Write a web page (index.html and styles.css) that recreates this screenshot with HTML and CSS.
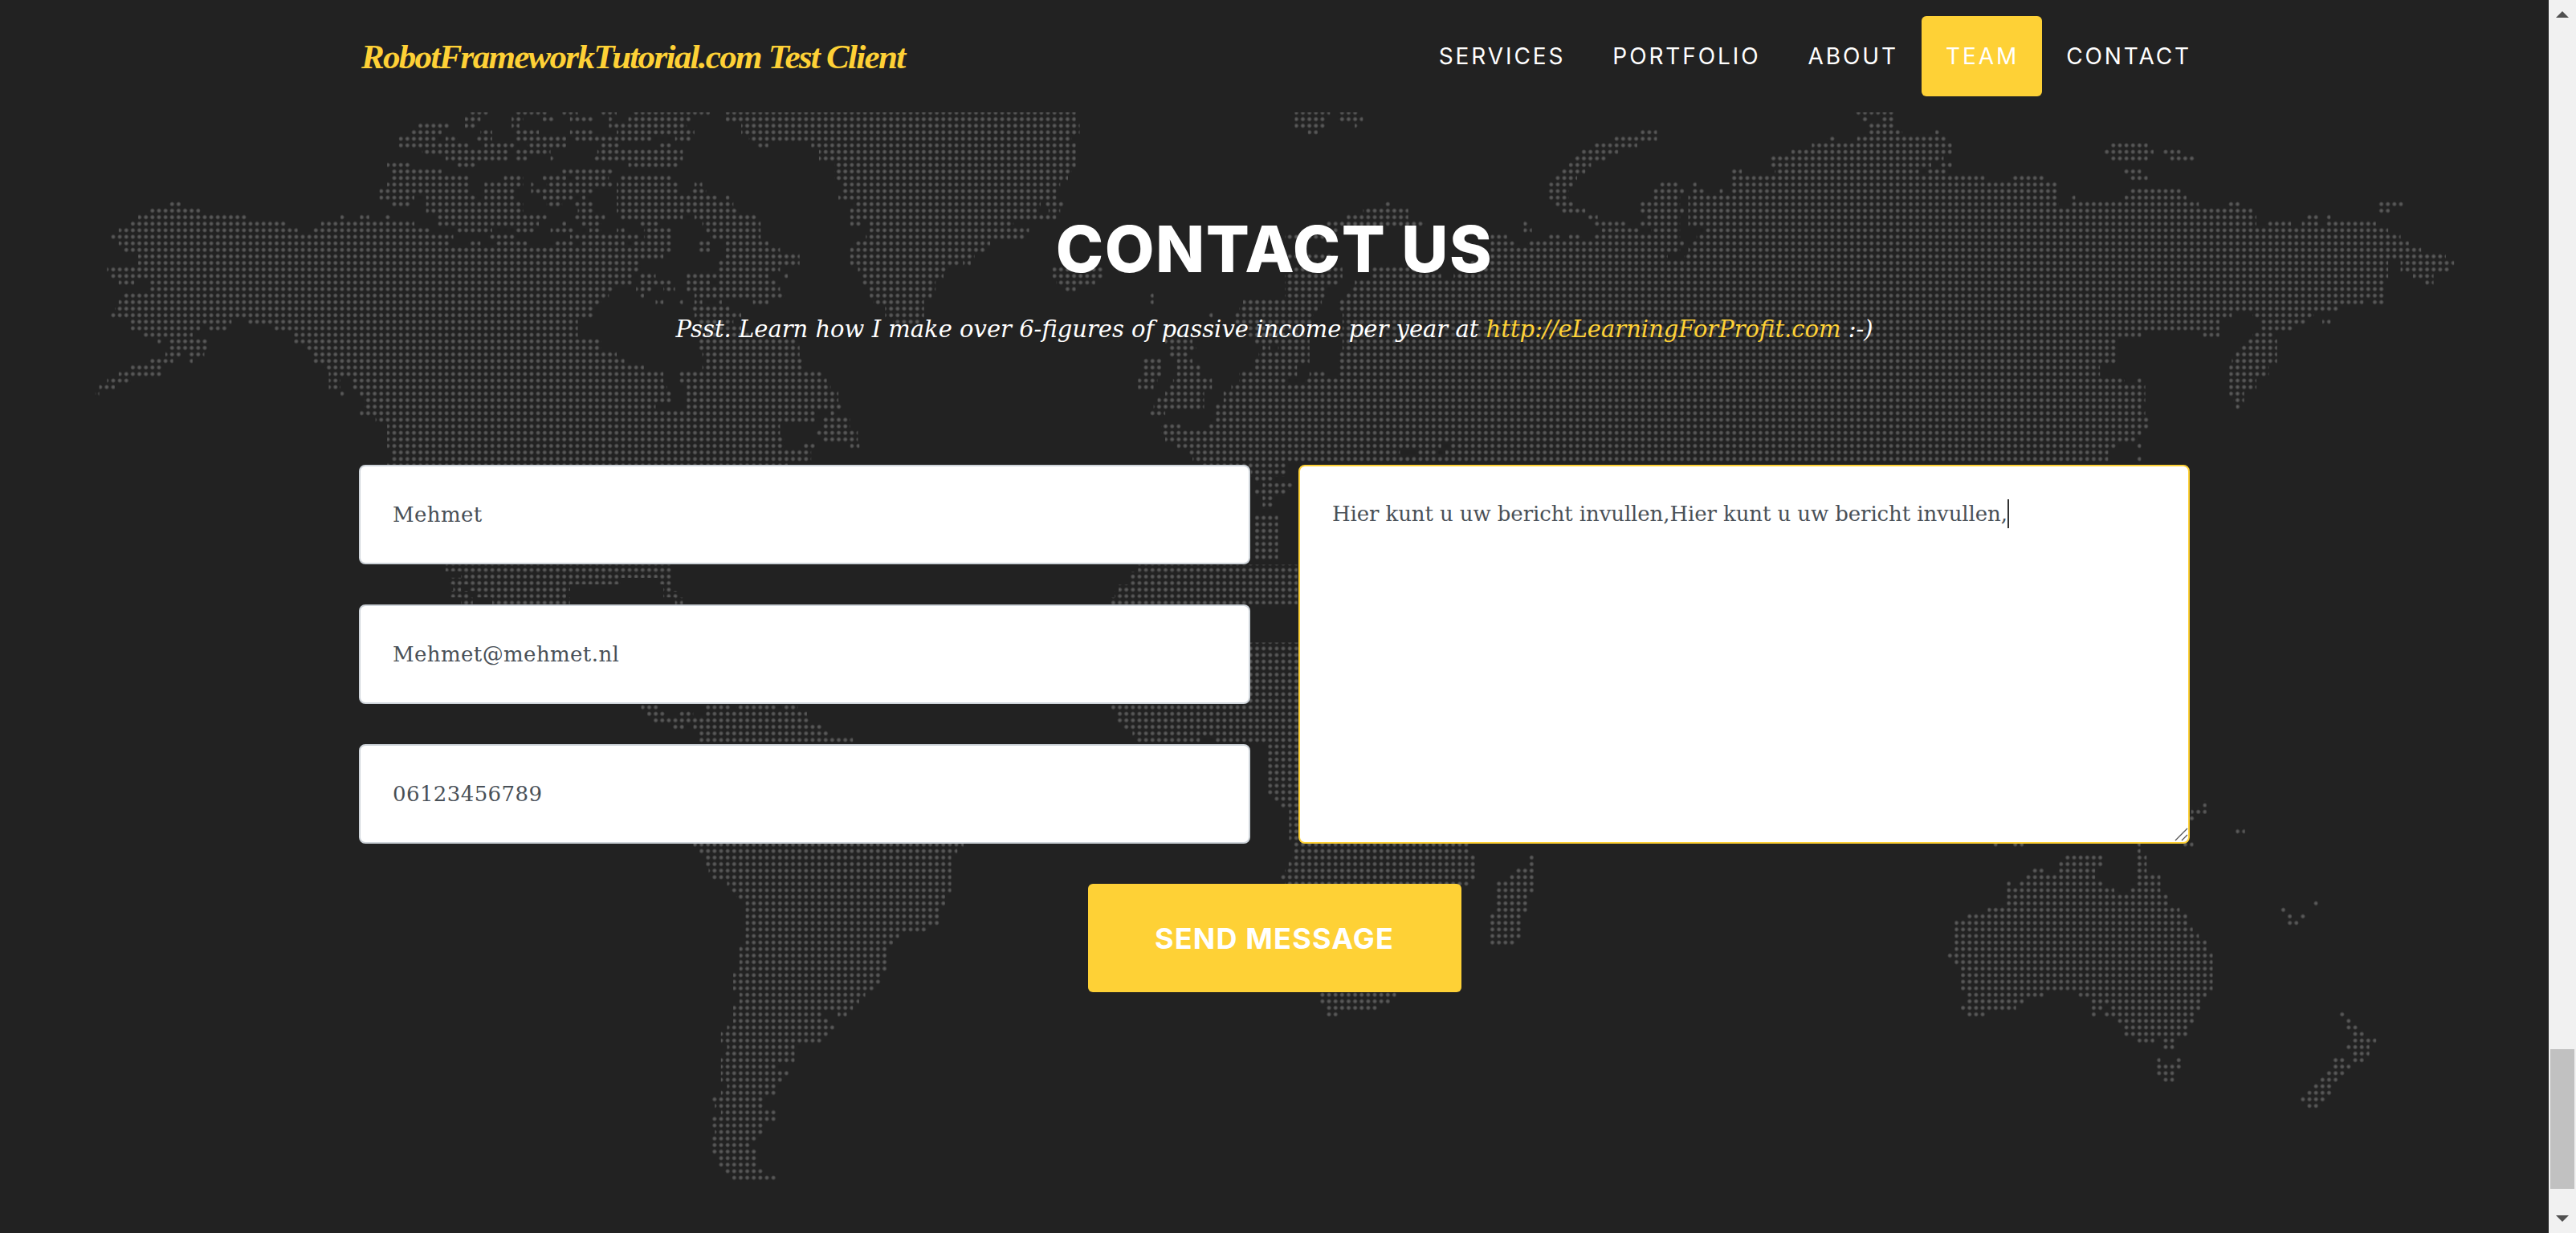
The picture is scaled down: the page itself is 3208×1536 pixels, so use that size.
FILE: index.html
```html
<!DOCTYPE html>
<html lang="en">
<head>
<meta charset="utf-8">
<title>RobotFrameworkTutorial.com Test Client</title>
<link rel="stylesheet" href="styles.css">
</head>
<body>
<div class="page">
  <svg class="world" viewBox="0 0 3174 1536" width="3174" height="1536" aria-hidden="true">
    <defs>
      <radialGradient id="dot">
        <stop offset="0" stop-color="#606060"/>
        <stop offset=".55" stop-color="#4e4e4e"/>
        <stop offset="1" stop-color="#222222"/>
      </radialGradient>
      <pattern id="dots" patternUnits="userSpaceOnUse" x="136.93" y="290.93" width="8.14" height="8.14">
        <circle cx="4.07" cy="4.07" r="3.2" fill="url(#dot)"/>
      </pattern>
      <mask id="land" maskUnits="userSpaceOnUse" x="0" y="0" width="3174" height="1536">
        <path class="land" stroke-width="17.5" transform="translate(80 120) scale(.969 .4656)" d="M520 44H545M580 44H620M640 44H660M690 44H710M730 44H830M850 44H1300
M515 61H535M575 61H590M615 61H630M650 61H680M700 61H705M725 61H805M850 61H1300
M455 79H495M515 79H530M575 79H585M700 79H800M870 79H1305
M445 96H485M535 96H550M580 96H610M650 96H680M710 96H810M870 96H1305
M430 114H480M490 114H505M530 114H550M580 114H645M655 114H755M785 114H805M880 114H1295
M430 131H520M540 131H580M595 131H645M690 131H715M765 131H780M890 131H905M960 131H1300
M460 149H570M580 149H625M685 149H795M970 149H1300
M490 166H570M580 166H595M625 166H630M680 166H795M970 166H1300
M415 184H445M505 184H530M725 184H790M990 184H1300
M420 201H485M640 201H705M990 201H1295
M420 219H520M565 219H590M615 219H645M655 219H700M715 219H780M990 219H1290
M415 236H520M540 236H590M600 236H605M620 236H705M710 236H790M810 236H820M1000 236H1280
M405 254H520M540 254H580M600 254H680M710 254H790M805 254H825M1000 254H1275
M405 271H450M465 271H530M540 271H580M615 271H655M665 271H670M710 271H840M850 271H855M995 271H1275
M135 289H150M420 289H445M465 289H590M620 289H640M655 289H680M710 289H860M1015 289H1255M1260 289H1285
M110 306H175M465 306H590M660 306H680M710 306H865M1010 306H1250M1265 306H1280
M95 323H235M355 323H362M380 323H392M412 323H420M480 323H620M655 323H695M715 323H795M810 323H890M1010 323H1275
M85 341H285M330 341H450M480 341H610M640 341H645M665 341H690M740 341H765M820 341H895M1010 341H1025M1035 341H1220
M70 358H300M320 358H470M505 358H550M580 358H605M625 358H655M675 358H690M710 358H720M745 358H780M825 358H895M1035 358H1240
M60 376H500M545 376H580M650 376H740M745 376H780M830 376H895M1030 376H1235
M70 393H495M520 393H535M555 393H595M630 393H655M665 393H720M730 393H780M815 393H830M850 393H905M1015 393H1190
M75 411H780M815 411H830M850 411H920M1010 411H1185
M95 428H770M850 428H945M1010 428H1170
M95 446H740M840 446H945M1010 446H1150M1155 446H1165
M55 463H740M840 463H920M1020 463H1135M1270 463H1335
M60 481H730M740 481H760M800 481H905M925 481H930M1025 481H1130M1270 481H1335
M70 498H90M110 498H730M740 498H780M800 498H830M840 498H915M1025 498H1120M1275 498H1325
M110 516H705M735 516H755M770 516H785M800 516H920M1035 516H1120M1285 516H1300
M75 533H700M740 533H745M810 533H925M1035 533H1115M1395 533H1400
M70 551H690M760 551H770M790 551H795M810 551H820M840 551H845M885 551H905M1040 551H1105M1395 551H1400M1515 551H1570
M65 568H680M805 568H855M1055 568H1105M1510 568H1570
M60 586H680M810 586H870M1055 586H1105M1470 586H1476M1505 586H1570
M85 603H215M235 603H660M815 603H860M1065 603H1100M1505 603H1570
M85 621H175M185 621H210M270 621H660M815 621H870M1510 621H1570
M100 638H165M295 638H660M820 638H880M1520 638H1570
M120 656H125M135 656H185M295 656H690M815 656H940M1415 656H1450M1530 656H1570
M135 673H185M310 673H690M815 673H945M1420 673H1455M1540 673H1550M1560 673H1570
M130 691H150M160 691H180M320 691H710M820 691H945M1420 691H1445M1535 691H1570
M110 708H140M160 708H165M320 708H720M825 708H950M1385 708H1410M1430 708H1450M1530 708H1570
M85 726H125M335 726H745M820 726H950M1385 726H1410M1430 726H1460M1530 726H1570
M70 743H125M340 743H770M790 743H975M1385 743H1410M1430 743H1460M1510 743H1570
M55 761H85M340 761H355M370 761H770M790 761H980M1380 761H1405M1425 761H1475M1510 761H1570
M45 778H65M340 778H355M370 778H775M800 778H985M1380 778H1400M1420 778H1475M1500 778H1570
M40 796H45M355 796H360M380 796H780M800 796H995M1415 796H1465M1490 796H1570
M385 813H780M800 813H995M1405 813H1465M1490 813H1570
M385 831H760M800 831H1000M1400 831H1465M1480 831H1570
M380 848H965M985 848H990M1395 848H1415M1480 848H1570
M400 866H965M975 866H1010M1480 866H1570
M415 883H920M975 883H1010M1410 883H1435M1470 883H1570
M415 901H920M965 901H1020M1410 901H1570
M415 918H925M975 918H1020M1415 918H1570
M415 936H925M950 936H965M1010 936H1022M1430 936H1570
M420 953H960M1445 953H1570
M420 971H960M1450 971H1570
M415 988H930M1460 988H1570
M1525 1008H1570M1530 1025H1555M1540 1043H1580M1530 1060H1570M1540 1078H1555M1540 1095H1555
M1530 1130H1560M1530 1148H1560M1530 1165H1560M1530 1183H1560M1530 1200H1560M1530 1218H1560M1530 1235H1560
M490 1262H780M1380 1262H1585M510 1280H780M1370 1280H1585M495 1297H715M765 1297H780M1370 1297H1585
M500 1315H510M520 1315H650M770 1315H780M1355 1315H1585M495 1332H520M530 1332H645M770 1332H790M1350 1332H1585
M510 1350H525M550 1350H650M785 1350H795M1345 1350H1585"/>
        <path class="land" stroke-width="17" transform="translate(1600 0) scale(1.0255 .491)" d="M12 286H55M65 286H90M692 286H740
M12 302H50M65 302H95M700 302H708M725 302H740
M12 319H50M85 319H90M708 319H740
M28 336H40M432 336H452M708 336H750M790 336H795
M400 352H452M660 352H668M695 352H803
M375 369H428M640 369H810M1003 369H1048
M360 385H405M615 385H810M995 385H1055M1065 385H1088
M352 402H390M590 402H800M1003 402H1048M1075 402H1105
M345 418H372M590 418H785M795 418H810
M335 435H365M542 435H555M595 435H770M780 435H803M1018 435H1040
M328 452H355M542 452H850M882 452H922M1025 452H1048
M320 468H350M455 468H478M495 468H500M542 468H938
M320 485H345M448 485H485M495 485H510M528 485H532M542 485H938M1025 485H1088
M320 501H345M448 501H480M490 501H938M955 501H960M1020 501H1095
M120 518H128M328 518H350M430 518H480M490 518H940M955 518H1110M1145 518H1160M1328 518H1358
M95 534H150M335 534H365M430 534H485M490 534H1175M1328 534H1342
M75 551H150M368 551H380M438 551H480M490 551H1180M1240 551H1255M1265 551H1270
M50 568H170M290 568H296M375 568H415M430 568H480M490 568H1180M1192 568H1222M1235 568H1255M1265 568H1325
M48 584H65M290 584H300M385 584H430M445 584H480M510 584H1340
M0 601H60M250 601H270M320 601H335M345 601H360M375 601H480M500 601H1355
M250 618H280M295 618H485M495 618H1365
M250 634H480M490 634H1380
M0 651H60M250 651H465M485 651H1410
M225 668H1340M1355 668H1420
M0 684H70M105 684H180M225 684H1340M1355 684H1415
M0 700H70M105 700H190M205 700H1340M1370 700H1395
M0 717H65M85 717H1335M1385 717H1395
M0 733H50M80 733H1335
M0 750H50M75 750H1335
M0 767H45M65 767H1310M1320 767H1335
M0 783H40M65 783H1280
M0 800H35M70 800H1150M1175 800H1250
M0 816H35M70 816H1135M1185 816H1240M1260 816H1270
M0 833H32M70 833H1135M1185 833H1225
M0 850H30M65 850H1040M1115 850H1135M1175 850H1200
M0 866H30M70 866H1010M1170 866H1205
M0 883H30M70 883H1010M1160 883H1205
M0 899H30M65 899H1010M1155 899H1205
M0 916H30M65 916H1010M1150 916H1205
M0 932H15M65 932H990M1147 932H1195
M0 949H15M30 949H50M65 949H990M1147 949H1195
M25 966H1020M1035 966H1040M1147 966H1180
M0 982H1045M1147 982H1180
M0 999H1045M1147 999H1165
M0 1015H1045M1152 1015H1165
M0 1032H1040M1155 1032H1160
M0 1048H1045M0 1065H1050M0 1081H1050M0 1098H1040M0 1115H1035
M0 1131H190M200 1131H1010M1035 1131H1040
M0 1148H140M160 1148H185M195 1148H1000
M0 1165H1000M1035 1165H1040"/>
        <path class="land" stroke-width="18.3" transform="translate(500 800) scale(.765 .4464)" d="M1380 10H1460M1380 28H1460M1380 46H1460M1380 64H1460M1380 82H1460M1380 100H1460M1380 118H1460M1380 136H1460M1380 154H1460M1380 172H1460
M390 182H420M495 182H535M545 182H610M620 182H645M1155 182H1460
M400 200H430M450 200H475M495 200H660M1165 200H1460
M410 218H665M1165 218H1460
M440 236H460M475 236H685M1175 236H1460
M485 254H695M1190 254H1460
M485 273H735M1195 273H1300M1325 273H1460
M1410 291H1460M1410 309H1460M1410 328H1460M1410 346H1460M1410 364H1460M1410 382H1460M1410 401H1460M1410 419H1460M1420 437H1460M1430 455H1460M1445 473H1460M1445 491H1460M1445 510H1460M1445 528H1460M1445 546H1460M1455 558H1460
M475 565H915M1455 565H1568
M485 583H905M1455 583H1568
M495 601H895M1450 601H1568
M495 619H895M1445 619H1568
M500 637H895M1440 637H1568
M505 655H895M1430 655H1568
M530 674H895M535 692H895M545 710H885M560 728H885M560 747H875M560 765H875M560 783H875M560 801H855M560 820H810M560 838H800
M550 856H790M550 874H790M550 892H790M550 910H790M540 929H780M540 947H780M540 965H770M550 983H755M550 1001H745M540 1020H735
M540 1038H685M710 1038H725M540 1056H695M530 1074H705M520 1093H695M520 1111H685M530 1129H640M525 1148H640M520 1166H640
M520 1184H610M520 1202H630M520 1220H620M530 1239H610M520 1257H610M505 1275H590M510 1293H590M520 1311H610M505 1330H610
M505 1348H590M510 1366H590M505 1384H578M505 1403H568M505 1421H578M515 1439H578M515 1457H578M525 1475H590M538 1494H610"/>
        <path class="land" stroke-width="17.7" transform="translate(1600 770) scale(.9566 .459)" d="M1195 505H1200M1180 523H1200M1175 541H1185M1238 579H1250
M12 614H240M922 614H928M948 614H962M1108 614H1114M1170 614H1183
M12 632H240M1108 632H1114
M12 650H248M318 650H324M1015 650H1065M1108 650H1122
M5 668H248M318 668H324M1008 668H1065M1108 668H1122
M0 685H248M300 685H324M972 685H988M1008 685H1055M1108 685H1122
M0 703H248M292 703H324M965 703H1055M1108 703H1140
M0 721H240M275 721H324M940 721H945M955 721H1065M1108 721H1140
M275 738H324M940 738H1080M1100 738H1140
M275 756H316M940 756H1150
M275 774H316M940 774H1150M1338 774H1345
M275 791H316M915 791H1165M1296 791H1303
M267 809H308M888 809H1175M1304 809H1311M1321 809H1329
M267 827H308M872 827H1175M1304 827H1320
M267 845H308M872 845H1182
M267 862H308M872 862H1190
M267 880H300M872 880H1200
M872 898H1200M862 915H1208M872 933H1208M880 951H1208M880 969H1208M880 986H1208M880 1004H1208
M45 1022H145M888 1022H988M1032 1022H1200
M45 1040H137M888 1040H962M1050 1040H1192
M53 1057H120M880 1057H952M1050 1057H1065M1075 1057H1192
M53 1075H70M888 1075H912M1050 1075H1056M1066 1075H1184M1372 1075H1380
M1084 1093H1184M1380 1093H1388
M1092 1110H1176M1380 1110H1397
M1092 1128H1176M1388 1128H1405
M1108 1146H1132M1143 1146H1158M1388 1146H1421
M1143 1164H1158M1380 1164H1412
M1388 1181H1412
M1134 1199H1140M1160 1199H1167M1364 1199H1380M1388 1199H1405
M1134 1217H1167M1364 1217H1388
M1134 1235H1158M1355 1235H1380
M1143 1252H1158M1347 1252H1371
M1338 1270H1363M1330 1288H1363M1322 1305H1355M1330 1323H1346"/>
      </mask>
    </defs>
    <rect width="3174" height="1536" fill="url(#dots)" mask="url(#land)"/>
  </svg>

  <header class="topbar">
    <a class="brand" href="#">RobotFrameworkTutorial.com Test Client</a>
    <nav class="menu">
      <a class="menu-link" href="#">SERVICES</a>
      <a class="menu-link" href="#">PORTFOLIO</a>
      <a class="menu-link" href="#">ABOUT</a>
      <a class="menu-link is-active" href="#">TEAM</a>
      <a class="menu-link" href="#">CONTACT</a>
    </nav>
  </header>

  <main class="contact">
    <h2 class="title">CONTACT US</h2>
    <p class="subtitle">Psst. Learn how I make over 6-figures of passive income per year at <a class="sub-link" href="#">http://eLearningForProfit.com</a> :-)</p>
    <form class="form">
      <div class="fields">
        <input class="field" type="text" value="Mehmet">
        <input class="field" type="text" value="Mehmet@mehmet.nl">
        <input class="field" type="text" value="06123456789">
      </div>
      <div class="message-wrap">
        <textarea class="message">Hier kunt u uw bericht invullen,Hier kunt u uw bericht invullen,</textarea>
        <span class="caret"></span>
        <svg class="grip" width="18" height="18" viewBox="0 0 18 18" aria-hidden="true"><path d="M1 17L16 2M9 17L16 10" fill="none" stroke="#555555" stroke-width="1.3"/></svg>
      </div>
      <button class="send" type="button">SEND MESSAGE</button>
    </form>
  </main>
</div>
<aside class="scrollbar">
  <span class="arrow arrow-up"></span>
  <span class="thumb"></span>
  <span class="arrow arrow-down"></span>
</aside>
</body>
</html>
```
FILE: styles.css
```css
* { box-sizing: border-box; }
html, body { margin: 0; height: 100%; }
body {
  display: flex;
  width: 3208px;
  height: 1536px;
  overflow: hidden;
  background: #222222;
  color: #ffffff;
  font-family: "Inter", sans-serif;
}
.page {
  position: relative;
  flex: 0 0 3174px;
  height: 1536px;
  overflow: hidden;
}
.world {
  position: absolute;
  left: 0;
  top: 0;
  display: block;
}
.land {
  fill: none;
  stroke: #ffffff;
}
.topbar {
  position: relative;
  height: 140px;
  padding: 20px 447px;
  display: flex;
  justify-content: space-between;
  align-items: center;
  background: #222222;
}
.brand {
  font-family: "Liberation Serif", serif;
  font-style: italic;
  font-weight: 700;
  font-size: 43px;
  letter-spacing: -1.7px;
  color: #fed136;
  text-decoration: none;
  padding-left: 3px;
}
.menu {
  display: flex;
  align-items: center;
  margin-right: -2px;
}
.menu-link {
  height: 100px;
  padding: 0 29px 0 30px;
  display: flex;
  align-items: center;
  font-size: 28px;
  letter-spacing: 2.9px;
  color: #ffffff;
  text-decoration: none;
  border-radius: 6px;
}
.menu-link:last-child { padding-right: 0; }
.is-active { background: #fed136; }
.contact {
  position: relative;
  padding: 126px 447px 0;
}
.title {
  margin: 0;
  font-size: 80px;
  line-height: 88px;
  font-weight: 800;
  letter-spacing: 1.5px;
  text-align: center;
}
.subtitle {
  margin: 32px 0 0;
  font-family: "DejaVu Serif", serif;
  font-style: italic;
  font-size: 29px;
  line-height: 48px;
  letter-spacing: 0;
  text-align: center;
}
.sub-link {
  color: #fed136;
  text-decoration: none;
}
.form {
  display: grid;
  grid-template-columns: 1110px 1110px;
  column-gap: 60px;
  row-gap: 50px;
  justify-items: stretch;
  margin-top: 145px;
}
.fields {
  display: grid;
  row-gap: 50px;
}
.field, .message {
  display: block;
  width: 100%;
  background: #ffffff;
  border: 2px solid #ced4da;
  border-radius: 8px;
  font-family: "DejaVu Serif", serif;
  font-size: 26px;
  letter-spacing: .4px;
  color: #495057;
  outline: none;
}
.field {
  height: 124px;
  padding: 0 40px;
}
.message-wrap {
  position: relative;
  height: 472px;
}
.message {
  height: 472px;
  padding: 38px 40px;
  line-height: 42px;
  letter-spacing: -.1px;
  border-color: #fed136;
  resize: none;
}
.caret {
  position: absolute;
  left: 883px;
  top: 43px;
  width: 2px;
  height: 36px;
  background: #333333;
}
.grip {
  position: absolute;
  right: 1px;
  bottom: 3px;
}
.send {
  grid-column: 1 / -1;
  justify-self: center;
  width: 465px;
  height: 135px;
  border: 0;
  border-radius: 6px;
  background: #fed136;
  color: #ffffff;
  font-family: "Inter", sans-serif;
  font-weight: 700;
  font-size: 36px;
  letter-spacing: 1.2px;
}
.scrollbar {
  position: relative;
  flex: 0 0 34px;
  height: 1536px;
  padding: 14px 0;
  background: #f1f1f1;
  display: flex;
  flex-direction: column;
  justify-content: space-between;
  align-items: center;
}
.arrow {
  width: 0;
  height: 0;
  border-left: 8px solid transparent;
  border-right: 8px solid transparent;
}
.arrow-up { border-bottom: 8px solid #505050; }
.arrow-down { border-top: 8px solid #505050; }
.thumb {
  position: absolute;
  left: 2px;
  top: 1307px;
  width: 30px;
  height: 174px;
  background: #c1c1c1;
}
```
